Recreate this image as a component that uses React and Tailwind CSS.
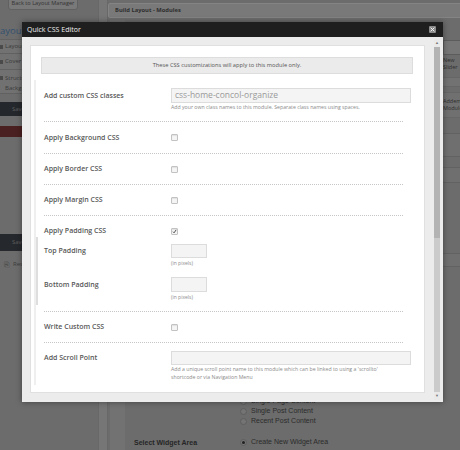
import React from "react";

function Sep() {
  return <div className="w-[359px] border-t border-dotted border-[#c6c6c6]" />;
}

function Checkbox({ checked }) {
  return (
    <span className="flex h-[7px] w-[7px] items-center justify-center rounded-[1px] border border-[#c2c2c2] bg-[#f5f5f5] shadow-[inset_0_1px_1px_rgba(0,0,0,0.08)]">
      {checked && (
        <svg viewBox="0 0 8 8" className="h-[7px] w-[7px]">
          <path d="M1.6 4.3 L3.3 6.1 L6.6 1.4" stroke="#2b2b2b" strokeWidth="1.3" fill="none" />
        </svg>
      )}
    </span>
  );
}

function Label({ children }) {
  return <div className="w-[127px] shrink-0 text-[7px] font-semibold leading-[10px] text-[#575757]">{children}</div>;
}

function CheckRow({ label, checked, cls }) {
  return (
    <div className={cls}>
      <Label>{label}</Label>
      <Checkbox checked={checked} />
    </div>
  );
}

function Radio({ on }) {
  return (
    <span className="flex h-[7px] w-[7px] items-center justify-center rounded-full border border-[#5e5e5e] bg-[#747474]">
      {on && <span className="h-[3px] w-[3px] rounded-full bg-[#222]" />}
    </span>
  );
}

export default function App() {
  return (
    <div className="relative h-[450px] w-[460px] overflow-hidden bg-[#6c6c6c] font-['Open_Sans',sans-serif]">
      {/* background page (dimmed) */}
      <div className="flex h-full">
        <aside className="flex w-[98px] shrink-0 flex-col">
          <div className="-mt-[4px] ml-[8px] flex h-[14px] w-[70px] items-end justify-center rounded-[3px] border border-[#616161] bg-[#797979] pb-[3px] text-[5.6px] leading-[6px] text-[#333]">
            Back to Layout Manager
          </div>
          <div className="-ml-[5px] mt-[15px] text-[9.5px] leading-[11px] text-[#32506f]">Layout</div>
          <div className="mt-[3px] flex h-[15px] items-center gap-[2px] border-y border-[#616161] bg-[#727272] text-[6px] text-[#3a3a3a]">
            <span className="h-[4px] w-[3px] bg-[#4a4a4a]" />
            Layout Settings
          </div>
          <div className="flex h-[16px] items-center gap-[2px] border-b border-[#616161] bg-[#717171] text-[6px] text-[#3a3a3a]">
            <span className="h-[4px] w-[3px] bg-[#4a4a4a]" />
            Cover Image
          </div>
          <div className="flex h-[24px] items-start gap-[2px] border-b border-[#616161] bg-[#717171] pt-[3px] text-[6px] leading-[10px] text-[#3a3a3a]">
            <span className="mt-[3px] h-[4px] w-[3px] bg-[#4a4a4a]" />
            <span>
              Structure &amp;
              <br />
              Background
            </span>
          </div>
          <div className="mt-[8px] flex h-[14px] items-center bg-[#24272b] pl-[12px] text-[6px] text-[#5f5f5f]">Save Layout</div>
          <div className="mt-[10px] h-[11px] bg-[#4b2020]" />
          <div className="mt-[97px] flex h-[17px] items-center bg-[#25282c] pl-[12px] text-[6px] text-[#5f5f5f]">Save Layout</div>
          <div className="mt-[9px] flex items-center gap-[3px] pl-[4px] text-[6px] text-[#3c3c3c]">
            <span className="text-[7px] leading-[8px]">⎘</span>
            Reset
          </div>
        </aside>
        <div className="w-[10px] shrink-0 border-x border-[#686868] bg-[#767676]" />
        <div className="flex flex-1 flex-col">
          <div className="mt-[3px] flex h-[15px] items-center rounded-l-[2px] border border-[#848484] bg-[#797979] pl-[6px] text-[5.8px] font-bold text-[#2e2e2e]">
            Build Layout - Modules
          </div>
          <div className="mt-[2px] flex flex-1">
            <div className="ml-[2px] w-[15px] shrink-0 bg-[#727272]" />
            <div className="flex w-[318px] shrink-0 flex-col">
              <div className="mt-[376px] flex">
                <div className="w-[115px] shrink-0 pl-[9px] pt-[42px] font-['Liberation_Sans',sans-serif] text-[7px] font-bold leading-[10px] text-[#262626]">
                  Select Widget Area
                </div>
                <div className="flex flex-col font-['Liberation_Sans',sans-serif] text-[7px] leading-[10px] text-[#2b2b2b]">
                  <div className="flex items-center gap-[4px]"><Radio />Single Page Content</div>
                  <div className="flex items-center gap-[4px]"><Radio />Single Post Content</div>
                  <div className="flex items-center gap-[4px]"><Radio />Recent Post Content</div>
                  <div className="mt-[11px] flex items-center gap-[4px]"><Radio on />Create New Widget Area</div>
                </div>
              </div>
            </div>
            <div className="flex flex-1 flex-col text-[5.5px] text-[#2e2e2e]">
              <div className="mt-[20px] h-[15px] border border-[#5c5c5c] bg-[#767676]" />
              <div className="mt-[2px] leading-[7px]">New Slider</div>
              <div className="mt-[6px] h-[10px] border-y border-[#666] bg-[#727272]" />
              <div className="mt-[5px] flex h-[26px] flex-col justify-center border-y border-[#666] bg-[#707070] leading-[7px]">
                <span>Addem</span>
                <span>Modules</span>
              </div>
              <div className="mt-[15px] h-[24px] border-y border-[#626262] bg-[#6f6f6f]" />
              <div className="mt-[10px] h-[16px] border-y border-[#626262] bg-[#6f6f6f]" />
              <div className="mt-[70px] h-[14px] border-y border-[#626262] bg-[#6f6f6f]" />
            </div>
          </div>
        </div>
      </div>

      {/* modal */}
      <div className="absolute left-[22px] top-[22px] flex h-[380px] w-[421px] flex-col shadow-[0_0_6px_rgba(0,0,0,0.4)]">
        <div className="flex h-[15px] shrink-0 items-center justify-between bg-[#1f1f1f] pl-[5px] pr-[7px]">
          <span className="text-[7px] leading-[9px] text-[#f0f0f0]">Quick CSS Editor</span>
          <span className="flex h-[7px] w-[7px] items-center justify-center rounded-[1px] bg-[#8a8a8a]">
            <svg viewBox="0 0 8 8" className="h-[5px] w-[5px]">
              <path d="M1 1 L7 7 M7 1 L1 7" stroke="#f2f2f2" strokeWidth="1.6" />
            </svg>
          </span>
        </div>
        <div className="flex flex-1 items-start bg-[#ececec] pl-[8px] pt-[2px]">
          <div className="mt-[6px] flex h-[348px] w-[395px] shrink-0 flex-col border border-[#e0e0e0] bg-white">
            <div className="ml-[10px] mt-[11px] flex h-[17px] w-[372px] items-center justify-center border border-[#dddddd] bg-[#ebebeb] text-[5.7px] text-[#555]">
              These CSS customizations will apply to this module only.
            </div>
            <div className="ml-[3px] mt-[6px] flex h-[305px] flex-col border-l-2 border-[#efefef] pl-[8px]">
              {/* custom classes */}
              <div className="flex h-[41px] flex-col pt-[8px]">
                <div className="flex h-[15px] items-center">
                  <Label>Add custom CSS classes</Label>
                  <div className="flex h-[15px] w-[240px] items-center border border-[#dcdcdc] bg-[#f4f4f4] pl-[3px] text-[8.5px] text-[#9a9a9a]">
                    css-home-concol-organize
                  </div>
                </div>
                <div className="ml-[127px] mt-[1px] text-[5.2px] leading-[6px] text-[#8a8a8a]">
                  Add your own class names to this module. Separate class names using spaces.
                </div>
              </div>
              <Sep />
              <CheckRow label="Apply Background CSS" cls="flex h-[31px] items-center" />
              <Sep />
              <CheckRow label="Apply Border CSS" cls="flex h-[30px] items-center" />
              <Sep />
              <CheckRow label="Apply Margin CSS" cls="flex h-[30px] items-center" />
              <Sep />
              <div className="flex h-[95px] flex-col">
                <CheckRow label="Apply Padding CSS" checked cls="mt-[9px] flex h-[12px] items-center" />
                <div className="-ml-[8px] flex h-[68px] flex-col border-l-2 border-[#dedede] pl-[6px]">
                  <div className="mt-[7px] flex h-[14px] items-center">
                    <Label>Top Padding</Label>
                    <div className="h-[14px] w-[36px] border border-[#dcdcdc] bg-[#f4f4f4]" />
                  </div>
                  <div className="ml-[127px] mt-[2px] text-[5px] leading-[6px] text-[#8a8a8a]">(in pixels)</div>
                  <div className="mt-[11px] flex h-[15px] items-center">
                    <Label>Bottom Padding</Label>
                    <div className="h-[15px] w-[36px] border border-[#dcdcdc] bg-[#f4f4f4]" />
                  </div>
                  <div className="ml-[127px] mt-[2px] text-[5px] leading-[6px] text-[#8a8a8a]">(in pixels)</div>
                </div>
              </div>
              <Sep />
              <CheckRow label="Write Custom CSS" cls="flex h-[30px] items-center" />
              <Sep />
              <div className="flex flex-col pt-[8px]">
                <div className="flex h-[14px] items-center">
                  <Label>Add Scroll Point</Label>
                  <div className="h-[14px] w-[240px] border border-[#dcdcdc] bg-[#f4f4f4]" />
                </div>
                <div className="ml-[127px] w-[230px] text-[5.2px] leading-[8px] text-[#8a8a8a]">
                  Add a unique scroll point name to this module which can be linked to using a 'scrollto' shortcode or via Navigation Menu
                </div>
              </div>
            </div>
          </div>
          <div className="ml-[9px] flex h-[361px] w-[6px] shrink-0 flex-col bg-[#cbcbcb]">
            <div className="flex h-[8px] items-center justify-center bg-[#e9e9e9] text-[4px] leading-[4px] text-[#777]">▲</div>
            <div className="h-[191px] bg-[#b3b3b3]" />
            <div className="flex-1" />
            <div className="flex h-[8px] items-center justify-center bg-[#e9e9e9] text-[4px] leading-[4px] text-[#777]">▼</div>
          </div>
        </div>
      </div>
    </div>
  );
}
